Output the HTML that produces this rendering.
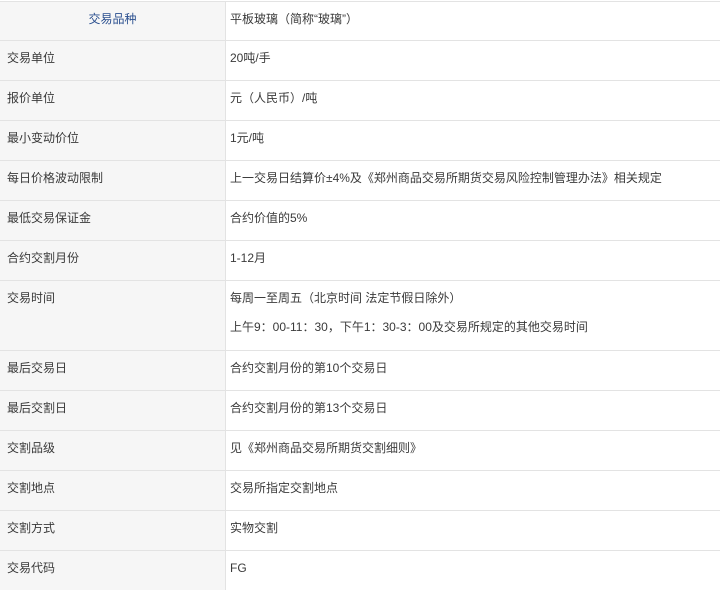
<!DOCTYPE html>
<html><head><meta charset="utf-8"><style>
body{margin:0;width:720px;height:566px;overflow:hidden;background:#fff;font-family:"Liberation Sans","Noto Sans CJK SC",sans-serif;font-size:12px;color:#3a3a3a;position:relative}
.r{position:absolute;left:0;width:720px;border-top:1px solid #e3e3e3;display:flex;line-height:14px}
.l{width:226px;background:#f6f6f6;border-right:1px solid #e3e3e3;box-sizing:border-box;padding:10px 0 0 7px}
.v{padding:10px 0 0 4px}
.h{text-align:center;padding-left:0;color:#2a4f8f}
</style></head><body>
<div class="r" style="top:1px;height:39px"><div class="l h">交易品种</div><div class="v">平板玻璃（简称“玻璃”）</div></div>
<div class="r" style="top:40px;height:39px"><div class="l">交易单位</div><div class="v">20吨/手</div></div>
<div class="r" style="top:80px;height:39px"><div class="l">报价单位</div><div class="v">元（人民币）/吨</div></div>
<div class="r" style="top:120px;height:39px"><div class="l">最小变动价位</div><div class="v">1元/吨</div></div>
<div class="r" style="top:160px;height:39px"><div class="l">每日价格波动限制</div><div class="v">上一交易日结算价±4%及《郑州商品交易所期货交易风险控制管理办法》相关规定</div></div>
<div class="r" style="top:200px;height:39px"><div class="l">最低交易保证金</div><div class="v">合约价值的5%</div></div>
<div class="r" style="top:240px;height:39px"><div class="l">合约交割月份</div><div class="v">1-12月</div></div>
<div class="r" style="top:280px;height:69px"><div class="l">交易时间</div><div class="v"><div style="margin-bottom:15px">每周一至周五（北京时间 法定节假日除外）</div><div>上午9：00-11：30，下午1：30-3：00及交易所规定的其他交易时间</div></div></div>
<div class="r" style="top:350px;height:39px"><div class="l">最后交易日</div><div class="v">合约交割月份的第10个交易日</div></div>
<div class="r" style="top:390px;height:39px"><div class="l">最后交割日</div><div class="v">合约交割月份的第13个交易日</div></div>
<div class="r" style="top:430px;height:39px"><div class="l">交割品级</div><div class="v">见《郑州商品交易所期货交割细则》</div></div>
<div class="r" style="top:470px;height:39px"><div class="l">交割地点</div><div class="v">交易所指定交割地点</div></div>
<div class="r" style="top:510px;height:39px"><div class="l">交割方式</div><div class="v">实物交割</div></div>
<div class="r" style="top:550px;height:39px"><div class="l">交易代码</div><div class="v">FG</div></div>
</body></html>
